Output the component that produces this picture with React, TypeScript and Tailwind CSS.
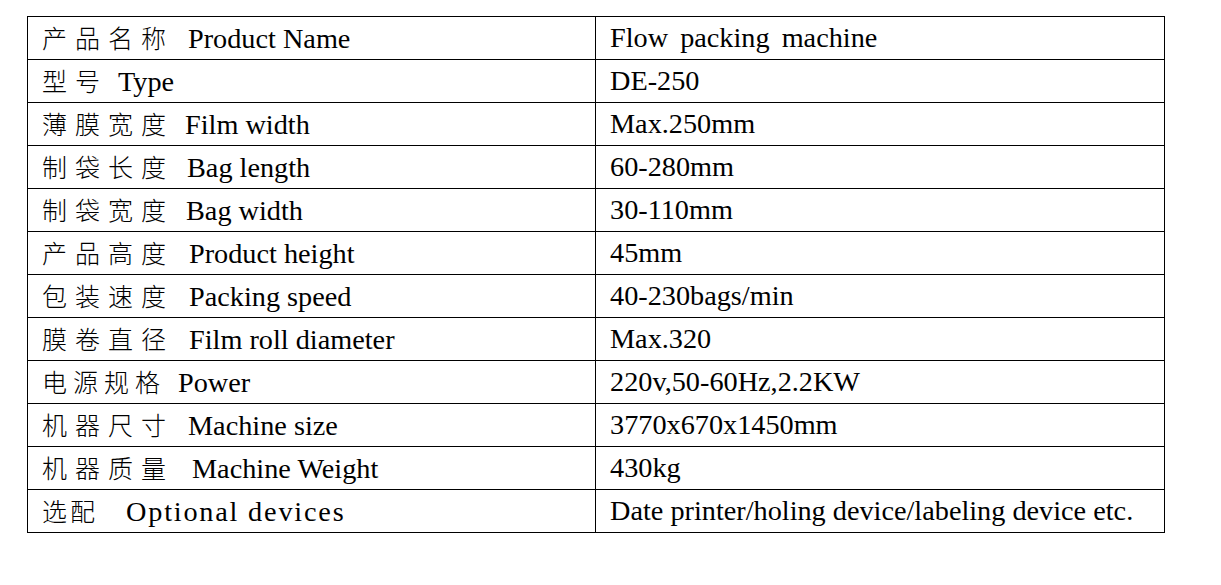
const ROWS = [
  { zh: "产品名称", en: "Product Name", value: "Flow packing machine", zhW: "w-[146px]", enCls: "", valueCls: "[word-spacing:5px]", zhCls: "tracking-[8px]" },
  { zh: "型号", en: "Type", value: "DE-250", zhW: "w-[76px]", enCls: "", valueCls: "", zhCls: "tracking-[8px]" },
  { zh: "薄膜宽度", en: "Film width", value: "Max.250mm", zhW: "w-[143px]", enCls: "", valueCls: "", zhCls: "tracking-[8px]" },
  { zh: "制袋长度", en: "Bag length", value: "60-280mm", zhW: "w-[145px]", enCls: "", valueCls: "", zhCls: "tracking-[8px]" },
  { zh: "制袋宽度", en: "Bag width", value: "30-110mm", zhW: "w-[144px]", enCls: "", valueCls: "", zhCls: "tracking-[8px]" },
  { zh: "产品高度", en: "Product height", value: "45mm", zhW: "w-[147px]", enCls: "", valueCls: "", zhCls: "tracking-[8px]" },
  { zh: "包装速度", en: "Packing speed", value: "40-230bags/min", zhW: "w-[147px]", enCls: "", valueCls: "", zhCls: "tracking-[8px]" },
  { zh: "膜卷直径", en: "Film roll diameter", value: "Max.320", zhW: "w-[147px]", enCls: "", valueCls: "", zhCls: "tracking-[8px]" },
  { zh: "电源规格", en: "Power", value: "220v,50-60Hz,2.2KW", zhW: "w-[136px]", enCls: "", valueCls: "", zhCls: "tracking-[6px]" },
  { zh: "机器尺寸", en: "Machine size", value: "3770x670x1450mm", zhW: "w-[146px]", enCls: "", valueCls: "", zhCls: "tracking-[8px]" },
  { zh: "机器质量", en: "Machine Weight", value: "430kg", zhW: "w-[150px]", enCls: "", valueCls: "", zhCls: "tracking-[8px]" },
  { zh: "选配", en: "Optional devices", value: "Date printer/holing device/labeling device etc.", zhW: "w-[84px]", enCls: "tracking-[1.8px]", valueCls: "", zhCls: "tracking-[3px]" },
];

export default function App() {
  return (
    <div className="h-[585px] w-[1221px] bg-white pl-[27px] pt-[16px] text-black">
      <div className="w-[1138px] border-x border-t border-black font-['Liberation_Serif','Times_New_Roman',serif] text-[28.25px]">
        {ROWS.map((row) => (
          <div key={row.zh} className="flex h-[43px] border-b border-black">
            <div className="flex w-[568px] items-center border-r border-black pb-[1px] pl-[14px]">
              <div className="flex items-baseline">
                <span
                  className={`${row.zhW} ${row.zhCls} shrink-0 whitespace-nowrap font-['Noto_Sans_CJK_SC',sans-serif] text-[25px] font-light leading-[31px]`}
                >
                  {row.zh}
                </span>
                <span className={`${row.enCls} whitespace-nowrap leading-[31px]`}>{row.en}</span>
              </div>
            </div>
            <div className="flex flex-1 items-center pb-[1px] pl-[14px]">
              <span className={`${row.valueCls} whitespace-nowrap leading-[31px]`}>{row.value}</span>
            </div>
          </div>
        ))}
      </div>
    </div>
  );
}
